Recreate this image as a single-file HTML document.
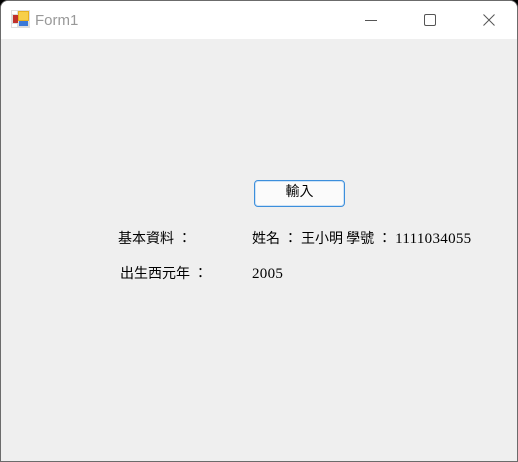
<!DOCTYPE html>
<html><head><meta charset="utf-8"><style>
html,body{margin:0;padding:0;background:#000;}
.win{position:absolute;left:0;top:0;width:516px;height:460px;border:1px solid #6b6b6b;border-radius:8px 8px 0 0;background:#efefef;overflow:hidden;}
.tb{position:absolute;left:0;top:0;width:516px;height:38px;background:#fff;}
.title{position:absolute;left:34px;top:11px;font:15px "Liberation Sans",sans-serif;color:#999;}
.t{position:absolute;font:14px "Noto Sans CJK TC",sans-serif;line-height:18px;color:#000;white-space:nowrap;}
.n{font-family:"Liberation Serif",serif;font-size:15px;letter-spacing:0.3px;}
.c{display:inline-block;width:21px;text-align:center;}
.btn{position:absolute;left:253px;top:179px;width:89px;height:25px;border:1px solid #3c8fdc;border-radius:4px;background:#fbfbfb;box-shadow:inset 0 0 0 1px #cfe3f6;text-align:center;line-height:25px;font:14px "Noto Sans CJK TC",sans-serif;}
</style></head><body>
<div class="win">
<div class="tb">
<svg style="position:absolute;left:10px;top:9px" width="19" height="18" viewBox="0 0 19 18">
<rect x="0" y="0" width="19" height="18" fill="#ddd"/>
<rect x="7" y="1" width="11" height="10" fill="#e8b020"/><rect x="8" y="2" width="9" height="8" fill="#f7cf4a"/>
<rect x="2" y="5" width="5" height="8" fill="#c0302a"/>
<rect x="8" y="11" width="9" height="5" fill="#3a78d8"/>
<rect x="1" y="1" width="5" height="3" fill="#fff"/><rect x="1" y="14" width="5" height="3" fill="#fff"/>
</svg>
<div class="title">Form1</div>
<svg style="position:absolute;left:364px;top:19px" width="12" height="2"><rect width="12" height="1" fill="#555"/></svg>
<svg style="position:absolute;left:423px;top:13px" width="12" height="12"><rect x="0.5" y="0.5" width="11" height="11" rx="1.5" fill="none" stroke="#555"/></svg>
<svg style="position:absolute;left:482px;top:13px" width="12" height="12"><path d="M0.5 0.5L11.5 11.5M11.5 0.5L0.5 11.5" stroke="#555"/></svg>
</div>
<div class="btn">輸入</div>
<div class="t" style="left:117px;top:228px">基本資料<span class="c">：</span></div>
<div class="t" style="left:251px;top:228px">姓名<span class="c">：</span>王小明 學號<span class="c">：</span><span class="n">1111034055</span></div>
<div class="t" style="left:119px;top:263px">出生西元年<span class="c">：</span></div>
<div class="t" style="left:251px;top:263px"><span class="n">2005</span></div>
</div>
</body></html>
